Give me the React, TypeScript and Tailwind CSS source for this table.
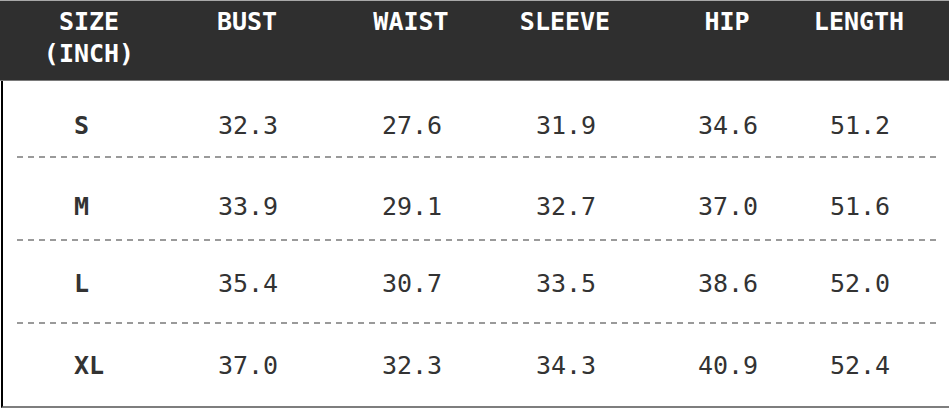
const headers = ["BUST", "WAIST", "SLEEVE", "HIP", "LENGTH"]

const rows = [
  { size: "S", values: ["32.3", "27.6", "31.9", "34.6", "51.2"], h: "h-[75px]", pt: "pt-[31px]" },
  { size: "M", values: ["33.9", "29.1", "32.7", "37.0", "51.6"], h: "h-[81px]", pt: "pt-[35px]" },
  { size: "L", values: ["35.4", "30.7", "33.5", "38.6", "52.0"], h: "h-[81px]", pt: "pt-[29px]" },
  { size: "XL", values: ["37.0", "32.3", "34.3", "40.9", "52.4"], h: "h-[82px]", pt: "pt-[28px]" },
]

// column centres measured from the chart: 90, 249, 413, 567, 729, 861
const grid = "grid grid-cols-[158px_158px_170px_138px_186px_78px] pl-[10px]"

function Dashes() {
  return (
    <div className="pl-[14px] pr-[8px]">
      <div className="h-[2px] bg-[repeating-linear-gradient(90deg,#9a9a9a_0_6px,transparent_6px_11px)]" />
    </div>
  )
}

export default function App() {
  return (
    <div className="w-[949px] h-[408px] bg-white overflow-hidden font-['DejaVu_Sans_Mono',monospace] text-[25px]">
      {/* header */}
      <div className="h-[81px] bg-[#2f2f2f] border-t border-t-[#a8a8a8] border-b border-b-[#7a7a7a]">
        <div className={`${grid} pt-[5px] font-bold text-white leading-[32px]`}>
          <div className="flex flex-col items-center">
            <span>SIZE</span>
            <span>(INCH)</span>
          </div>
          {headers.map((h) => (
            <div key={h} className="flex justify-center whitespace-nowrap">
              {h}
            </div>
          ))}
        </div>
      </div>

      {/* body */}
      <div className="h-[327px] border-l-2 border-l-black border-b-2 border-b-[#7e7e7e] ml-px">
        {rows.map((row, i) => (
          <div key={row.size}>
            <div className={`${row.h} ${row.pt}`}>
              <div className={`${grid} -ml-[2px] leading-[28px] text-[#333]`}>
                <div className="pl-[63px] font-bold">{row.size}</div>
                {row.values.map((v, j) => (
                  <div key={j} className="flex justify-center whitespace-nowrap">
                    {v}
                  </div>
                ))}
              </div>
            </div>
            {i < rows.length - 1 && <Dashes />}
          </div>
        ))}
      </div>
    </div>
  )
}
